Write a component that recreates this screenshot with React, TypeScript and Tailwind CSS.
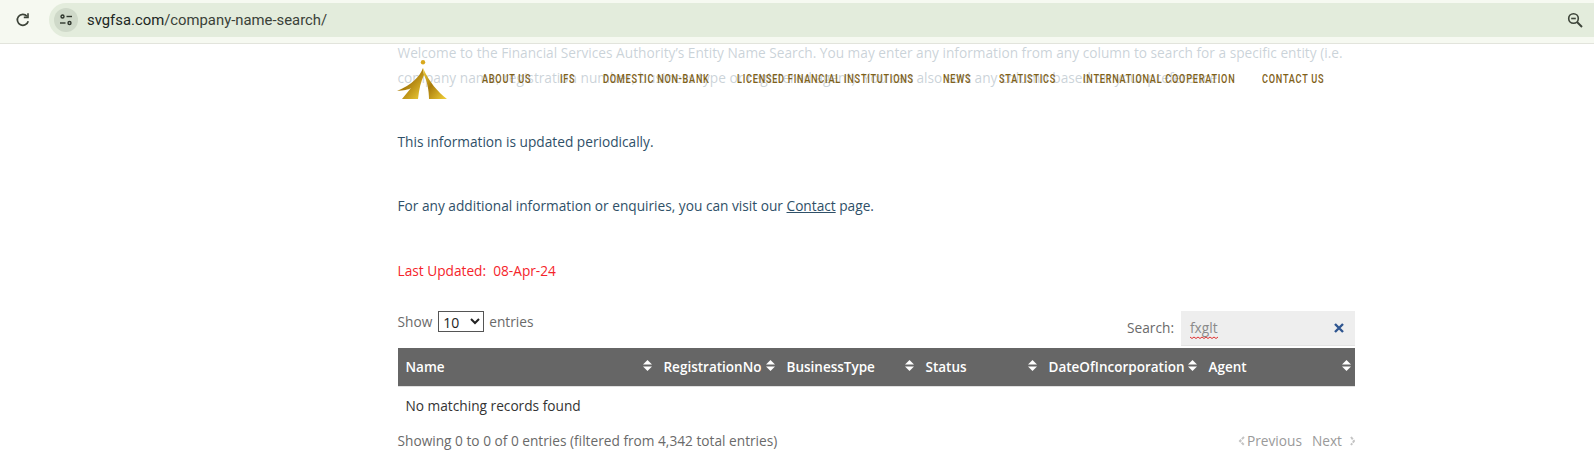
import React from "react";

function Sort() {
  return (
    <svg width="9" height="11" viewBox="0 0 9 11" className="absolute right-[4px] top-[12px]" fill="#fff">
      <path d="M4.5 0 L9 4.5 H0 Z" />
      <path d="M0 6.5 H9 L4.5 11 Z" />
    </svg>
  );
}

const cols: [string, string][] = [
  ["Name", "w-[258px]"],
  ["RegistrationNo", "w-[123px]"],
  ["BusinessType", "w-[139px]"],
  ["Status", "w-[123px]"],
  ["DateOfIncorporation", "w-[160px]"],
  ["Agent", "w-[154px]"],
];

const nav: [string, string][] = [
  ["ABOUT US", "w-[78px]"],
  ["IFS", "w-[43px]"],
  ["DOMESTIC NON-BANK", "w-[134px]"],
  ["LICENSED FINANCIAL INSTITUTIONS", "w-[206px]"],
  ["NEWS", "w-[56px]"],
  ["STATISTICS", "w-[84px]"],
  ["INTERNATIONAL COOPERATION", "w-[179px]"],
  ["CONTACT US", "w-[62px]"],
];

export default function App() {
  return (
    <div className="w-[1594px] h-[468px] overflow-hidden bg-white font-['Open_Sans','Noto_Sans',sans-serif] text-[13.7px] text-[#6a6a6a]">
      <div className="h-[44px] bg-[#f6f9f1] border-b border-[#e2e4dc] flex items-start pt-[3px]">
        <svg width="16" height="16" viewBox="0 0 16 16" className="ml-[15px] mt-[9px] shrink-0" fill="none" stroke="#3d4439" strokeWidth="1.7">
          <path d="M13.2 9.2A5.5 5.5 0 1 1 12 4.2" />
          <path d="M13 1.2V5.4H8.8" strokeWidth="1.6" />
        </svg>
        <div className="ml-[18px] flex-1 h-[34px] rounded-l-full bg-[#e3ecdc] flex items-center pl-[5px] pr-[11px]">
          <div className="w-[24px] h-[24px] rounded-full bg-[#cfd9c9] flex items-center justify-center">
            <svg width="14" height="12" viewBox="0 0 14 12" fill="none" stroke="#2e352c" strokeWidth="1.4">
              <circle cx="3.5" cy="2.5" r="1.5" />
              <path d="M7.5 2.5H13" />
              <path d="M1 9H6.5" />
              <circle cx="10.5" cy="9" r="1.5" />
            </svg>
          </div>
          <span className="ml-[9px] font-['Roboto',sans-serif] text-[14.85px] text-[#20261f]">svgfsa.com<span className="text-[#3a4138]">/company-name-search/</span></span>
          <svg width="16" height="16" viewBox="0 0 16 16" className="ml-auto" fill="none" stroke="#3d4439" strokeWidth="1.6">
            <circle cx="6.5" cy="6.5" r="4.8" />
            <path d="M10 10L15 15" strokeWidth="1.9" />
            <path d="M4.2 6.5H8.8" />
          </svg>
        </div>
      </div>

      <div className="relative">
        <div className="w-[957px] ml-[397.5px] -mt-[4px] text-[#2f5068] leading-[25px]">
          <p className="h-[83px]">
            Welcome to the Financial Services Authority’s Entity Name Search. You may enter any information from any column to search for a specific entity (i.e. company name, registration number, business type or registered agent). You can also sort any column based on your preference.
          </p>
          <p className="h-[36px] flex items-center">This information is updated periodically.</p>
          <p className="mt-[28px] h-[36px] flex items-center">
            <span>
              For any additional information or enquiries, you can visit our <span className="underline">Contact</span> page.
            </span>
          </p>
          <p className="mt-[29px] h-[36px] flex items-center text-[#f5242b]">Last Updated:&nbsp; 08-Apr-24</p>
        </div>

        <div className="w-[957px] ml-[398px] mt-[23px]">
          <div className="flex justify-between h-[37px]">
            <label className="flex items-start leading-[22px] -ml-[0.5px]">
              Show
              <select className="ml-[6px] mr-[5px] w-[46px] h-[21px] border border-[#555] text-[14px] text-[#222] bg-white">
                <option>10</option>
              </select>
              entries
            </label>
            <div className="flex items-center h-[35px]">
              <span>Search:</span>
              <div className="ml-[7px] w-[174px] h-[35px] bg-[#eeeeee] border-b border-[#e3e3e3] flex items-center pl-[9px] pr-[11px]">
                <span className="relative text-[#8a8a8a]">
                  fxglt
                  <svg width="28" height="3" viewBox="0 0 28 3" className="absolute left-0 top-[18px]" fill="none" stroke="#e03030" strokeWidth="1">
                    <path d="M0 1 L2 2.5 L4 1 L6 2.5 L8 1 L10 2.5 L12 1 L14 2.5 L16 1 L18 2.5 L20 1 L22 2.5 L24 1 L26 2.5 L28 1" />
                  </svg>
                </span>
                <svg width="10" height="10" viewBox="0 0 10 10" className="ml-auto" stroke="#2f5590" strokeWidth="2.4">
                  <path d="M1 1L9 9M9 1L1 9" />
                </svg>
              </div>
            </div>
          </div>

          <table className="w-[957px] table-fixed border-collapse">
            <thead>
              <tr className="bg-[#666666] text-white h-[38px]">
                {cols.map(([c, w]) => (
                  <th key={c} className={`relative ${w} pl-[7.5px] pt-[1px] text-left font-semibold text-[13.5px] whitespace-nowrap border-b border-[#e0e0e0]`}>
                    {c}
                    <Sort />
                  </th>
                ))}
              </tr>
            </thead>
            <tbody>
              <tr className="h-[38px]">
                <td colSpan={6} className="pl-[7.5px] pt-[2px] text-[#333]">No matching records found</td>
              </tr>
            </tbody>
          </table>

          <div className="flex justify-between items-center h-[34px] -ml-[0.5px]">
            <span>Showing 0 to 0 of 0 entries (filtered from 4,342 total entries)</span>
            <div className="flex items-center text-[#9a9a9a]">
              <svg width="7" height="10" viewBox="0 0 7 10" fill="none" stroke="#c4c4c4" strokeWidth="2" strokeDasharray="3 1"><path d="M6 1L2 5L6 9" /></svg>
              <span className="ml-[2px]">Previous</span>
              <span className="ml-[10px]">Next</span>
              <svg width="5" height="10" viewBox="0 0 5 10" fill="none" stroke="#c4c4c4" strokeWidth="2" strokeDasharray="3 1" className="ml-[8px]"><path d="M1 1L4 5L1 9" /></svg>
            </div>
          </div>
        </div>

        <div className="absolute left-0 top-[4px] w-full h-[60px] bg-white/75">
          <div className="absolute left-[396px] top-[16px]">
            <svg width="54" height="42" viewBox="0 0 54 42">
              <defs>
                <linearGradient id="gold" x1="0" y1="0" x2="1" y2="1">
                  <stop offset="0" stopColor="#f5d63e" />
                  <stop offset="0.45" stopColor="#a97c0c" />
                  <stop offset="1" stopColor="#f3d23a" />
                </linearGradient>
              </defs>
              <circle cx="27" cy="2.2" r="2.2" fill="#d9a81c" />
              <path d="M27 8C24 16 16 25 1 31C8 30 12 30 15 28L6 39H22C23 29 25 21 28 15Z" fill="url(#gold)" />
              <path d="M27 8C33 22 42 32 51 39H33C33 30 31 21 28 15Z" fill="url(#gold)" />
            </svg>
          </div>
          <nav className="absolute left-[482px] top-[28px] flex font-['Roboto',sans-serif] font-medium text-[13px] tracking-[1.05px] text-[#7f6118] leading-[14px] whitespace-nowrap">
            {nav.map(([n, w]) => (
              <a key={n} className={w}>
                <span className="inline-block origin-left scale-x-[0.705]">{n}</span>
              </a>
            ))}
          </nav>
        </div>
      </div>
    </div>
  );
}
